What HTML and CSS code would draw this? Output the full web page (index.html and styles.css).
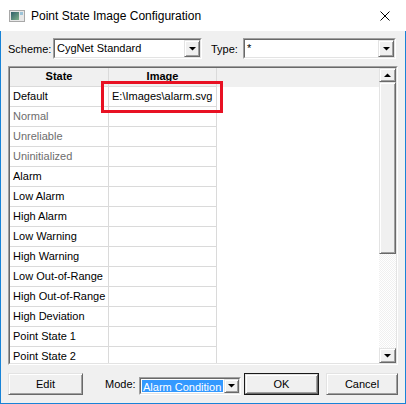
FILE: index.html
```html
<!DOCTYPE html>
<html lang="en">

<head>
  <meta charset="UTF-8" />
  <title>Point State Image Configuration</title>
  <link rel="stylesheet" href="styles.css">
</head>

<body>
  <div class="window">
    <div class="titlebar">
      <svg class="title-icon" width="16" height="12" viewBox="0 0 16 12">
        <defs>
          <linearGradient id="ic" x1="0" y1="0" x2="1" y2="1">
            <stop offset="0" stop-color="#2f5f6a" />
            <stop offset="1" stop-color="#7fb08a" />
          </linearGradient>
        </defs>
        <rect x="0.5" y="0.5" width="15" height="11" fill="#e8e8e8" stroke="#a8a8a8" />
        <rect x="2" y="2" width="8" height="8" fill="url(#ic)" />
        <rect x="11" y="2" width="3" height="3" fill="#9cc3d8" />
      </svg>
      <span class="title">Point State Image Configuration</span>
      <div class="close">
        <svg width="10" height="10" viewBox="0 0 10 10">
          <path d="M0.5 0.5 L9.5 9.5 M9.5 0.5 L0.5 9.5" stroke="#000" stroke-width="1" />
        </svg>
      </div>
    </div>

    <div class="body">
      <div class="top-row">
        <span class="lbl lbl-scheme">Scheme:</span>
        <div class="combo combo-scheme">
          <div class="combo-in">
            <span class="combo-text">CygNet Standard</span>
            <div class="drop-btn"><svg width="7" height="4" viewBox="0 0 7 4"><polygon points="0,0 7,0 3.5,3.5" fill="#000" /></svg></div>
          </div>
        </div>
        <span class="lbl lbl-type">Type:</span>
        <div class="combo combo-type">
          <div class="combo-in">
            <span class="combo-text">*</span>
            <div class="drop-btn"><svg width="7" height="4" viewBox="0 0 7 4"><polygon points="0,0 7,0 3.5,3.5" fill="#000" /></svg></div>
          </div>
        </div>
      </div>

      <div class="grid-box">
        <div class="grid-in">
          <div class="grid-main">
            <div class="grid-row grid-head">
              <div class="cell c-state">State</div>
              <div class="cell c-image">Image</div>
            </div>
            <div class="grid-row"><div class="cell c-state">Default</div><div class="cell c-image">E:\Images\alarm.svg</div></div>
            <div class="grid-row"><div class="cell c-state dim">Normal</div><div class="cell c-image"></div></div>
            <div class="grid-row"><div class="cell c-state dim">Unreliable</div><div class="cell c-image"></div></div>
            <div class="grid-row"><div class="cell c-state dim">Uninitialized</div><div class="cell c-image"></div></div>
            <div class="grid-row"><div class="cell c-state">Alarm</div><div class="cell c-image"></div></div>
            <div class="grid-row"><div class="cell c-state">Low Alarm</div><div class="cell c-image"></div></div>
            <div class="grid-row"><div class="cell c-state">High Alarm</div><div class="cell c-image"></div></div>
            <div class="grid-row"><div class="cell c-state">Low Warning</div><div class="cell c-image"></div></div>
            <div class="grid-row"><div class="cell c-state">High Warning</div><div class="cell c-image"></div></div>
            <div class="grid-row"><div class="cell c-state">Low Out-of-Range</div><div class="cell c-image"></div></div>
            <div class="grid-row"><div class="cell c-state">High Out-of-Range</div><div class="cell c-image"></div></div>
            <div class="grid-row"><div class="cell c-state">High Deviation</div><div class="cell c-image"></div></div>
            <div class="grid-row"><div class="cell c-state">Point State 1</div><div class="cell c-image"></div></div>
            <div class="grid-row"><div class="cell c-state">Point State 2</div><div class="cell c-image"></div></div>
          </div>
          <div class="scrollbar">
            <div class="sb-btn sb-up"><svg width="7" height="4" viewBox="0 0 7 4"><polygon points="0,4 7,4 3.5,0.5" fill="#000" /></svg></div>
            <div class="sb-thumb"></div>
            <div class="sb-track"></div>
            <div class="sb-btn sb-down"><svg width="7" height="4" viewBox="0 0 7 4"><polygon points="0,0 7,0 3.5,3.5" fill="#000" /></svg></div>
          </div>
        </div>
        <div class="callout"></div>
      </div>

      <div class="bottom-row">
        <button class="btn btn-edit">Edit</button>
        <span class="lbl lbl-mode">Mode:</span>
        <div class="combo combo-mode">
          <div class="combo-in">
            <span class="mode-sel">Alarm Condition</span>
            <div class="drop-btn"><svg width="7" height="4" viewBox="0 0 7 4"><polygon points="0,0 7,0 3.5,3.5" fill="#000" /></svg></div>
          </div>
        </div>
        <div class="default-wrap"><button class="btn btn-ok">OK</button></div>
        <button class="btn btn-cancel">Cancel</button>
      </div>
    </div>
  </div>
</body>

</html>
```

FILE: styles.css
```css
body {
  margin: 0;
  padding: 0;
  font-family: "Liberation Sans", Arial, sans-serif;
  font-size: 11px;
  color: #000;
  background: #fff;
}

.window {
  width: 406px;
  height: 404px;
  display: flex;
  flex-direction: column;
}

/* title bar */
.titlebar {
  height: 31px;
  flex: none;
  background: #fff;
  display: flex;
  align-items: center;
  padding-left: 9px;
  font-size: 12px;
}

.title-icon {
  margin-right: 6px;
  margin-top: 1px;
}

.title {
  flex: 1;
  margin-top: 1px;
}

.close {
  width: 41px;
  height: 31px;
  display: flex;
  align-items: center;
  justify-content: center;
  margin-right: 1px;
}

/* dialog body */
.body {
  flex: 1;
  background: #f0f0f0;
  border: 1px solid #1883d7;
  border-top: none;
  padding: 7px 7px 8px 7px;
  display: flex;
  flex-direction: column;
}

.top-row {
  display: flex;
  align-items: center;
  height: 21px;
  margin-bottom: 7px;
}

.lbl-scheme {
  width: 45px;
}

.lbl-type {
  width: 32px;
  margin-left: 9px;
}

.combo {
  height: 21px;
  box-sizing: border-box;
  border: 1px solid;
  border-color: #a0a0a0 #fff #fff #a0a0a0;
  background: #fff;
}

.combo-in {
  height: 100%;
  box-sizing: border-box;
  border: 1px solid;
  border-color: #696969 #e3e3e3 #e3e3e3 #696969;
  display: flex;
  align-items: stretch;
}

.combo-scheme {
  width: 149px;
}

.combo-type {
  width: 153px;
}

.combo-text {
  flex: 1;
  padding-left: 2px;
  line-height: 17px;
}

.drop-btn {
  width: 16px;
  box-sizing: border-box;
  background: #f0f0f0;
  border: 1px solid;
  border-color: #e3e3e3 #696969 #696969 #e3e3e3;
  box-shadow: inset 1px 1px #fff, inset -1px -1px #a0a0a0;
  display: flex;
  align-items: center;
  justify-content: center;
}

/* grid */
.grid-box {
  position: relative;
  height: 299px;
  box-sizing: border-box;
  border: 1px solid;
  border-color: #a0a0a0 #fff #fff #a0a0a0;
}

.grid-in {
  height: 100%;
  box-sizing: border-box;
  border: 1px solid;
  border-color: #696969 #e3e3e3 #e3e3e3 #696969;
  display: flex;
  overflow: hidden;
}

.grid-main {
  flex: 1;
  background: #fff;
  overflow: hidden;
}

.grid-row {
  display: flex;
  height: 20px;
}

.grid-head {
  height: 19px;
  background: #f0f0f0;
  font-weight: bold;
}

.cell {
  box-sizing: border-box;
  border-right: 1px solid #dadada;
  border-bottom: 1px solid #dadada;
  padding-left: 3px;
  line-height: 19px;
  white-space: nowrap;
}

.grid-head .cell {
  text-align: center;
  padding-left: 0;
  line-height: 17px;
}

.c-state {
  width: 99px;
}

.c-image {
  width: 108px;
}

.dim {
  color: #6d6d6d;
}

.scrollbar {
  width: 17px;
  display: flex;
  flex-direction: column;
}

.sb-btn,
.sb-thumb {
  box-sizing: border-box;
  background: #f0f0f0;
  border: 1px solid;
  border-color: #e3e3e3 #696969 #696969 #e3e3e3;
  box-shadow: inset 1px 1px #fff, inset -1px -1px #a0a0a0;
}

.sb-btn {
  display: flex;
  align-items: center;
  justify-content: center;
}

.sb-up {
  height: 14px;
}

.sb-thumb {
  height: 172px;
}

.sb-track {
  flex: 1;
  background-color: #fff;
  background-image: conic-gradient(#f0f0f0 25%, #fff 0 50%, #f0f0f0 0 75%, #fff 0);
  background-size: 2px 2px;
}

.sb-down {
  height: 15px;
}

.callout {
  position: absolute;
  left: 92px;
  top: 14px;
  width: 122px;
  height: 32px;
  box-sizing: border-box;
  border: 3px solid #e81123;
}

/* bottom buttons */
.bottom-row {
  display: flex;
  align-items: center;
  height: 22px;
  margin-top: 8px;
}

.btn {
  height: 22px;
  box-sizing: border-box;
  font-family: "Liberation Sans", Arial, sans-serif;
  font-size: 11px;
  color: #000;
  background: #f0f0f0;
  border: 1px solid;
  border-color: #e3e3e3 #696969 #696969 #e3e3e3;
  box-shadow: inset 1px 1px #fff, inset -1px -1px #a0a0a0;
  padding: 0;
}

.btn-edit {
  width: 75px;
}

.lbl-mode {
  margin-left: 22px;
  width: 34px;
}

.combo-mode {
  width: 102px;
  height: 18px;
  margin-top: 4px;
  margin-right: 3px;
}

.mode-sel {
  flex: 1;
  margin: 1px 1px 1px 1px;
  background: #3399ff;
  color: #fff;
  padding-left: 1px;
  line-height: 14px;
}

.drop-btn svg {
  display: block;
}

.combo-mode .drop-btn {
  width: 15px;
}

.default-wrap {
  width: 75px;
  height: 22px;
  box-sizing: border-box;
  border: 1px solid #1a1a1a;
  margin-right: 7px;
}

.btn-ok {
  width: 73px;
  height: 20px;
  display: block;
}

.btn-cancel {
  width: 72px;
}
```
